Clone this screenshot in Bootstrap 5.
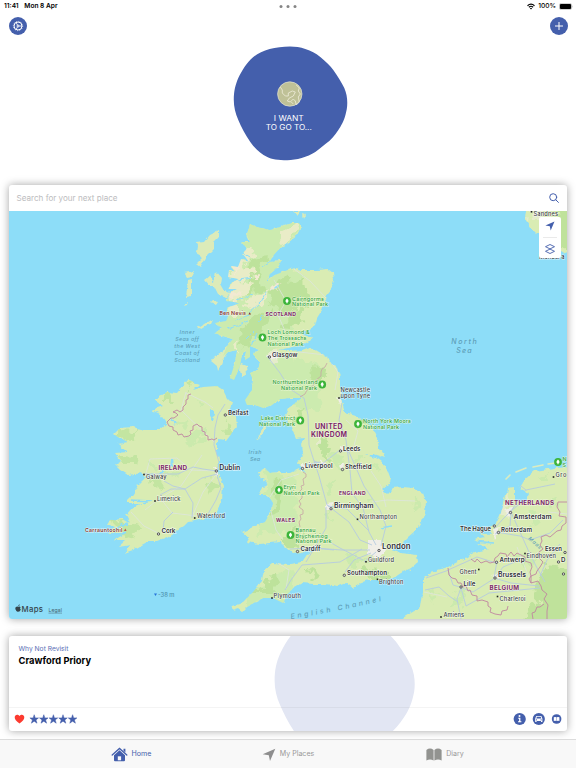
<!DOCTYPE html>
<html lang="en">
<head>
<meta charset="utf-8">
<meta name="viewport" content="width=device-width, initial-scale=1">
<title>Places</title>
<link href="https://cdn.jsdelivr.net/npm/bootstrap@5.3.0/dist/css/bootstrap.min.css" rel="stylesheet">
<style>
:root{--brand:#445fac}
body{font-family:Inter,"Liberation Sans",sans-serif;background:#fff;width:576px;height:768px;overflow:hidden;color:#000}
svg{display:block;flex:none}
.status{height:12px;padding:0 3px 0 4px;font-size:6.6px;font-weight:600;line-height:12px}
.battery-text{margin:0 3px;font-weight:500}
.dot3{width:3px;height:3px;border-radius:50%;background:#858585}
.topbar{height:28px;padding:0 8px 0 8.5px}
.round{width:18px;height:18px;background:var(--brand)}
.hero{height:145px;padding:6px 0 0 3px}
.hero-text{fill:#fff;font-size:7.3px;text-anchor:middle}
.panel{margin:0 9px;border-radius:3px;box-shadow:0 0 9px rgba(0,0,0,.36);background:#fff;overflow:hidden}
.search{height:26px;padding:0 8.5px 0 7.5px;font-size:8.100px;color:#bcbcbe}
.map-box{height:408px;background:#8dddf8}
.controls{right:6px;top:6px;width:22px;height:41px;border-radius:2px}
.controls hr{width:14px;color:#aaa}
.revisit{height:95px;margin-top:17px}
.revisit-blob{left:264.500px;top:-22px}
.revisit-top{height:71.5px;padding:9px 9.5px;border-bottom:1.5px solid rgba(0,0,0,.045)}
.kicker{font-size:6.7px;line-height:9px;color:#5a70b5}
.place{font-size:9.35px;line-height:13px;font-weight:700}
.revisit-foot{height:23.5px;padding:0 5px}
.tabs{height:29px;background:#f8f8f8;border-top:1px solid #dcdcdc;font-size:7.1px;color:#999}
.tab{width:157px;padding-top:1px}
.tab.on{color:var(--brand)}
.city{font-weight:600;fill:#2e3136;stroke:#fff;stroke-opacity:.8;stroke-width:1.2px;paint-order:stroke}
.town{font-weight:500;fill:#3c4146;stroke:#fff;stroke-opacity:.7;stroke-width:1px;paint-order:stroke}
.land-name{font-weight:700;fill:#7d2867;stroke:#fff;stroke-opacity:.6;stroke-width:1px;paint-order:stroke}
.park{font-size:5.45px;font-weight:500;fill:#2f9e3d;stroke:#f2fbe0;stroke-opacity:.8;stroke-width:1px;paint-order:stroke}
.peak{font-size:5.3px;font-weight:600;fill:#873930;stroke:#fff;stroke-opacity:.7;stroke-width:1px;paint-order:stroke}
.sea{font-style:italic;font-weight:500;fill:#5f9fb8}
</style>
<script src="https://cdn.jsdelivr.net/npm/bootstrap@5.3.0/dist/js/bootstrap.bundle.min.js"></script>
</head>
<body class="d-flex flex-column">

<div class="status d-flex align-items-center justify-content-between position-relative">
  <div class="d-flex"><span>11:41</span><span class="ms-1 text-nowrap">&nbsp;Mon 8 Apr</span></div>
  <div class="position-absolute start-50 translate-middle-x d-flex gap-1"><i class="dot3"></i><i class="dot3"></i><i class="dot3"></i></div>
  <div class="d-flex align-items-center">
    <svg width="8" height="7" viewBox="0 0 16 13" fill="none" stroke="#000" stroke-width="2.2"><path d="M1 5Q8-1.5 15 5M3.7 8Q8 4 12.3 8"/><path d="M8 12.5 5.7 10Q8 8.2 10.3 10Z" fill="#000" stroke="none"/></svg>
    <span class="battery-text">100%</span>
    <svg width="14" height="7" viewBox="0 0 14 7"><rect x=".4" y=".4" width="12.2" height="6.200" rx="1.7" fill="none" stroke="#aaa" stroke-width=".6"/><rect x=".9" y=".9" width="11.200" height="5.200" rx="1.1"/><path d="M13.200 2.5v2q.8-1 0-2" fill="#999"/></svg>
  </div>
</div>

<div class="topbar d-flex justify-content-between align-items-center">
  <span class="round rounded-circle d-flex align-items-center justify-content-center">
    <svg width="12" height="12" viewBox="0 0 24 24" fill="none" stroke="#fff" stroke-width="2"><circle cx="12" cy="12" r="8"/><circle cx="12" cy="12" r="9.3" stroke-width="1.600" stroke-dasharray="1.800 3.070"/><circle cx="12" cy="12" r="2"/><path d="M14 12h6M11 10 8 5M11 14 8 19" stroke-width="1.600"/></svg>
  </span>
  <span class="round rounded-circle d-flex align-items-center justify-content-center">
    <svg width="10" height="10" viewBox="0 0 10 10" stroke="#fff" stroke-width="1" stroke-linecap="round"><path d="M5 1.4v7.2M1.4 5h7.2"/></svg>
  </span>
</div>

<div class="hero">
  <svg class="mx-auto" width="116" height="116" viewBox="-.3 0 116 116">
    <defs><path id="blob" d="M56.7.4C62 .4 67 1 72 3 78 5 82 7 87 11 92 15 97 20 100 24 105 31 108 36 111 42 114 49 114.500 56 113.500 63 112 71 110 76 107 81 104 86 101 90 96 95 91 99 87 102 82 106 74 111 63 114.200 54 114.200 45 114.200 38 113.500 34 111 27 107.500 22 103 17 96 12 89 8 81 5 74 2 67 .5 61 .5 54 .5 45 2 39 5 32 9 24 13 17 20 11 28 4 42 .4 56.700.4Z"/></defs>
    <use href="#blob" x="1" fill="#445fac"/>
    <circle cx="57.500" cy="48" r="12.2" fill="#bfc197" stroke="#e4e4d4" stroke-width=".7"/>
    <path d="M48 41 50 44 50 47 53 50 56 50 56 47 60 45 63 46 61 50 57 52 55 55 58 56 61 53 63 55 64 59 67 56 66 51 68 48 66 45 67 42 64 39M59 56 61 58" fill="none" stroke="#f0eedb" stroke-width=".8" stroke-linejoin="round"/>
    <text class="hero-text" x="56.500" y="75.200" textLength="30" lengthAdjust="spacingAndGlyphs">I WANT</text>
    <text class="hero-text" x="56.500" y="83.600" textLength="46" lengthAdjust="spacingAndGlyphs">TO GO TO...</text>
  </svg>
</div>

<main class="panel">
  <div class="search d-flex align-items-center justify-content-between"><span>Search for your next place</span>
    <svg width="10" height="10" viewBox="0 0 10 10" fill="none" stroke="#445fac" stroke-width="1" stroke-linecap="round"><circle cx="4.200" cy="4.200" r="3.500"/><path d="m6.800 6.800 2.600 2.600"/></svg>
  </div>
  <div class="map-box position-relative">
    <svg width="558" height="408" viewBox="9 211 558 408">
      <defs>
        <filter id="rough" x="-2%" y="-2%" width="104%" height="104%"><feTurbulence type="fractalNoise" baseFrequency=".16" numOctaves="3" seed="4"/><feDisplacementMap in="SourceGraphic" scale="5" xChannelSelector="R" yChannelSelector="G"/></filter>
        <filter id="patchy" x="-5%" y="-5%" width="110%" height="110%"><feTurbulence type="fractalNoise" baseFrequency=".1" numOctaves="3" seed="9"/><feDisplacementMap in="SourceGraphic" scale="17" xChannelSelector="R" yChannelSelector="G"/></filter>
        <path id="gb" d="M250 224 257 227 270 230 280 227 292 223 299 223 301 227 297 235 288 242 280 248 272 257 270 262 281 261 277 268 270 274 267 281 275 275 285 271 295 268 303 270 317 270 328 269 333 273 334 280 332 287 327 293 326 300 322 310 317 318 315 325 307 330 298 335 303 335 312 337 309 341 303 345 292 347 279 350 290 351 302 350 310 347 318 352 327 357 329 361 337 368 340 377 340 390 342 402 345 412 355 415 363 420 372 427 377 437 379 448 385 458 373 454 366 454 375 457 382 462 387 470 390 478 388 485 382 490 387 494 393 488 403 487 413 488 423 493 426 502 425 513 422 521 415 532 408 538 401 545 391 550 401 553 417 555 418 562 411 568 401 573 395 577 388 580 378 580 368 580 360 583 353 588 346 583 338 586 325 584 313 584 302 583 293 588 287 595 283 603 273 598 263 598 255 602 247 607 242 612 238 609 232 611 233 606 242 603 253 592 262 581 264 570 273 563 290 564 302 562 308 553 319 547 310 547 302 552 292 553 285 547 280 542 270 543 260 544 246 542 249 537 242 532 253 527 265 522 272 510 273 503 268 495 258 495 263 487 269 483 261 479 258 472 265 468 270 473 280 472 290 472 298 468 307 473 298 462 303 453 302 443 305 437 296 438 290 424 285 417 290 407 302 398 290 398 280 399 272 405 263 408 255 405 247 405 245 400 252 390 253 380 250 373 258 370 260 362 253 354 260 350 250 346 250 357 245 360 246 350 242 354 240 366 234 380 230 378 235 363 237 350 228 352 223 356 227 346 233 339 223 336 215 333 222 328 215 323 226 321 229 316 227 308 240 303 227 301 231 292 237 289 228 289 233 282 239 279 228 277 229 270 236 272 231 266 238 267 241 259 249 262 243 254 247 248 241 242 250 242 247 235Z"/>
        <path id="ie" d="M182 387 188 380 199 384 193 390 203 387 217 386 223 390 227 398 232 403 229 412 236 417 237 427 232 433 226 441 217 440 217 450 219 460 218 473 223 485 222 500 217 512 208 517 197 521 188 522 183 527 175 532 167 538 157 542 147 542 133 550 124 553 131 545 118 547 126 540 115 540 122 533 108 533 115 528 107 525 110 520 123 519 130 523 126 515 133 507 142 503 125 503 133 495 138 485 145 478 142 473 128 475 120 470 115 465 122 461 115 453 127 452 118 444 128 442 118 437 114 434 120 428 133 427 145 430 160 430 167 424 160 414 152 410 163 406 154 400 167 392 177 393Z"/>
        <path id="eu" d="M401 619 411 613 421 607 423 593 423 578 431 572 448 567 465 558 475 552 489 549 477 543 487 544 474 539 485 537 479 532 493 533 488 528 497 523 501 513 505 500 508 488 514 487 514 500 524 503 529 493 519 488 524 480 535 471 555 468 572 467 572 624H401Z"/>
        <path id="no" d="M527 206 525 218 531 228 538 235 555 246 572 257V206Z"/>
        <clipPath id="landclip"><use href="#gb"/><use href="#ie"/><use href="#eu"/><use href="#no"/></clipPath>
        <g id="tree"><circle r="3.900" fill="#3cb43a"/><path d="M0-2.500C1.800-.8 2 .8.600 1.200V2.300H-.6V1.200C-2 .8-1.800-.8 0-2.500Z" fill="#fff"/></g>
        <circle id="pt" r="1.200" fill="#ddd" stroke="#3b3b40" stroke-width=".8"/>
        <rect id="sq" x="-.8" y="-.8" width="1.600" height="1.600" fill="#222"/>
      </defs>
      <g filter="url(#rough)">
        <g fill="#d9ecb3"><use href="#gb"/><use href="#ie"/><use href="#eu"/><use href="#no"/></g>
        <g fill="#dcebb9">
          <path d="M219 230 219 237 214 242 214 249 207 256 200 267 196 264 203 257 196 253 197 246 196 242 204 241 209 235ZM184 273 195 271 192 277 187 278ZM188 281 192 280 192 296 186 297ZM186 303 188 301 187 305 184 306ZM216 271 221 277 220 284 224 291 231 293 227 297 218 294 214 286 209 286 204 280 210 275 214 283ZM213 301 218 302 216 305 211 303ZM198 328 212 319 210 323 199 330ZM228 344 230 348 225 356 222 364 218 371 217 366 211 361 215 356 223 352ZM241 363 246 365 247 375 242 377 240 371ZM260 437 267 429 266 425 260 432 256 440ZM293 211 300 211 297 216ZM303 214 306 215 304 219Z"/>
        </g>
      </g>
      <g clip-path="url(#landclip)">
        <g filter="url(#patchy)">
          <path fill="#ccebaf" d="M244 216 308 217 283 260 305 278 290 305 295 338 275 348 260 420 200 370 205 300 228 252Z"/>
          <path fill="#ccebaf" d="M255 360 290 355 322 367 320 410 294 407 250 411ZM268 468 295 475 299 530 258 535ZM241 596 290 570 299 590 250 620Z"/>
          <path fill="#bde29b" d="M276 278 305 282 308 305 290 315 277 310 268 295ZM240 328 255 316 273 310 258 340 238 348ZM250 259 269 257 259 272 264 293 248 292ZM290 329 300 323 308 309 300 305 280 328ZM311 367 324 368 322 383 313 386ZM293 416 304 405 303 424 293 427ZM355 419 371 425 355 428ZM323 437 331 447 329 465 319 445ZM275 477 283 480 280 510 271 513ZM283 537 304 528 296 548 283 545ZM252 595 276 575 278 595ZM307 568 320 574 312 582ZM365 569 390 572 390 580 355 576Z"/>
          <path fill="#e9ecc7" d="M237 250 251 246 255 255 244 264 255 270 240 282 254 285 243 298 229 301 226 269ZM285 229 300 222 293 238 279 246ZM246 300 268 290 263 300 248 309ZM230 303 237 300 237 315 226 315ZM230 345 237 341 234 354Z"/>
          <path fill="#f2e9d2" d="M230 261 240 265 232 279ZM227 290 239 291 234 301ZM248 276 259 275 254 281ZM270 283 280 286 273 293Z"/>
          <path fill="#c3e5a1" d="M118 429 137 430 132 442 119 440ZM115 454 136 456 134 466 123 466ZM186 381 195 380 188 391ZM150 481 160 478 163 488 152 490ZM205 483 218 480 218 492 210 494ZM115 520 143 524 135 540 118 536ZM160 401 170 392 175 401ZM225 422 234 429 224 436ZM109 519 120 518 117 525Z"/>
          <path fill="#cbeaad" d="M150 463 158 463 155 470ZM185 439 204 428 207 436 190 446ZM199 401 205 403 197 409ZM174 424 187 421 185 430ZM172 469 180 477 167 475ZM325 485 335 480 334 499ZM322 515 330 508 331 523ZM375 463 382 470 374 471ZM365 497 374 499 366 506ZM353 456 365 456 357 462ZM344 555 373 560 347 567ZM415 495 421 507 414 510ZM330 456 342 454 340 471ZM535 476 547 472 545 482ZM527 510 541 514 534 527ZM547 502 559 500 556 510ZM459 590 466 600 453 609ZM427 590 437 587 432 601ZM509 553 534 557 526 570Z"/>
          <path fill="#bfe29b" d="M545 566 580 570 580 630 516 630 528 606 542 608 534 592ZM555 200 580 200 580 265 558 244Z"/>
          <path fill="#e5eccb" d="M529 211 548 214 545 222 530 222ZM501 515 504 501 509 492 507 519ZM343 390 344 404 340 404ZM318 434 323 440 318 448ZM266 352 280 352 276 359 266 357Z"/>
        </g>
        <g fill="#f0eee8" filter="url(#rough)"><path d="M368 541 381 541 386 549 379 558 368 555ZM266 355 274 353 280 356 270 359ZM326 504 332 503 333 511 326 511ZM302 463 307 465 302 472ZM340 445 345 446 341 452ZM336 397 342 398 341 404ZM213 467 218 467 218 477ZM319 459 326 463 321 465ZM340 464 344 464 342 472ZM491 575 499 574 498 580ZM504 510 513 507 511 517ZM493 529 500 527 495 540Z"/></g>
      </g>
      <g fill="#8dddf8" filter="url(#rough)"><path d="M209 409 214 410 216 416 212 420 209 415ZM171 419 177 421 174 425ZM171 459 173 459 174 467 170 467ZM159 474 163 469 163 473Z"/></g>
      <g fill="none" stroke="#8dddf8" stroke-width="1" filter="url(#rough)"><path d="M236 320 246 316 261 302 267 291M228 329 247 322M267 281 282 262M271 290 278 286M236 300 252 295M263 266 272 260M245 340 254 331M252 345 257 334M239 280 252 278M242 252 250 257M263 315 258 322"/><path d="M145 477 152 475M131 500 151 501M142 503 152 501M115 529 128 523M111 541 126 532M469 533 492 533M472 541 494 543M380 528 392 526" stroke-width="1.600"/></g>
      <g fill="none" stroke="#dcecc0" stroke-width="1.600" stroke-linecap="round"><path d="M506 479 510 475M516 472 526 468M533 467 543 465M548 464 556 463"/></g>
      <g fill="none" stroke="#dde4e1" stroke-width=".75" stroke-linejoin="round" clip-path="url(#landclip)">
        <path d="M303 346 285 331 278 315 286 301 274 280M294 269 310 281 326 298M335 390 338 372 326 355 299 352M186 393 205 402 213 408M186 392 181 410 214 442M145 477 150 459 177 458 191 470 216 471M145 510 160 498 181 486 202 455M160 498 172 513 205 517M131 512 144 526 158 533M218 472 203 492 192 517M283 540 276 530 268 500 281 480 299 474M273 560 289 570 286 589M415 501 387 500 372 502M346 420 358 431 353 449M371 471 381 486 386 507M548 512 567 514M517 547 530 580M424 592 447 597"/>
      </g>
      <g fill="none" stroke="#b5cbe0" stroke-width=".9" stroke-linejoin="round" clip-path="url(#landclip)">
        <path d="M267 356 280 373 290 389 304 398 308 415 309 445 314 461 319 476 327 505 349 522 360 540 372 545M314 461 322 464 340 450 349 452M342 403 339 420 346 440 350 470 352 493 363 508 369 532 376 545M349 452 364 486 380 510 386 526 381 546M328 506 347 509 369 531M304 465 320 462M290 549 314 548 342 550 370 550M306 562 315 547 326 528 326 507M345 572 354 560 371 553M364 562 376 552M328 541 340 548 363 560M285 590 291 580 302 565 340 562 362 549M225 404 218 415 215 428 214 445 219 462 217 472M217 471 203 469 193 467 178 474 144 474M217 474 202 478 185 489 171 489 160 495M185 489 173 486 164 481M217 475 221 488 216 500 208 514M185 489 193 503 192 518M163 532 164 521 173 512M313 548 334 550M494 529 503 519 511 511 523 501M496 532 520 536 530 540 550 533 563 520M511 512 510 526 495 534M511 512 520 532 529 552 536 566 545 582M497 561 494 578 511 583 539 586M496 563 477 557 448 570 453 585 460 587M462 588 473 592 495 578 503 567 515 562M461 588 457 599 461 619M461 588 466 606 489 593 540 588M426 578 449 570M425 590 439 587 449 596 458 602M511 511 526 490 517 483M526 490 555 484M560 544 547 560 540 576"/>
      </g>
      <g fill="none" stroke="#bf87a0" stroke-width=".9" stroke-linejoin="round">
        <path d="M191 394 188 395 188 399 186 400 186 404 183 407 183 410 180 412 177 410 173 412 176 413 178 415 174 418 171 418 167 422 169 426 173 427 173 430 177 432 178 435 182 434 184 437 189 436 191 434 190 431 193 430 193 426 197 424 199 426 202 427 202 431 205 432 205 435 208 436 208 440 212 439 214 440 217 438"/>
        <path d="M327 363 325 367 322 369 321 372 321 376 315 381 313 386 307 390 305 394 300 397M303 472 306 474 306 477 303 479 304 485 301 486 302 489 299 492 302 495 302 498 299 501 301 504 299 507 303 510 303 514 300 515 301 519 299 522 300 527" stroke="#c7a4a5" stroke-width=".8"/>
        <path d="M448 568 449 575 452 578 456 579 458 583 461 583 463 587 466 586 468 591 470 590 472 595 477 596 477 601 482 600 488 602 488 606 491 608 490 612 495 614 501 615 502 611 507 610 508 606M471 559 475 562 477 559 481 563 486 561 490 563 494 562 495 558 498 556 500 553 506 554 507 557 511 552 514 556 517 553 525 557 525 561 531 563 532 567 530 572 531 576 529 579 531 583 538 581 541 586 542 590 547 594 544 599 548 605 547 611 547 619M567 502 558 502 557 507 560 512 559 516 566 517 566 523 562 526 561 530 557 531 550 537 546 535 541 537 542 541 540 545 543 549 539 552 538 557 543 562 540 567 537 571 536 574 531 576 531 583M544 604 540 607 537 607 535 612 532 613 533 619"/>
      </g>
      <g>
        <use href="#tree" x="287" y="301"/><use href="#tree" x="262.500" y="337.500"/><use href="#tree" x="322.200" y="384.500"/><use href="#tree" x="300.300" y="420.500"/><use href="#tree" x="358" y="424"/><use href="#tree" x="279" y="490"/><use href="#tree" x="290.500" y="535"/><use href="#tree" x="558" y="462"/>
      </g>
      <g class="park">
        <text x="292" y="300.500" textLength="32">Cairngorms</text><text x="292" y="306.300" textLength="36">National Park</text>
        <text x="267.500" y="334" textLength="42">Loch Lomond &amp;</text><text x="267.500" y="339.800" textLength="39">The Trossachs</text><text x="267.500" y="345.500" textLength="36">National Park</text>
        <text x="272.500" y="384" textLength="45">Northumberland</text><text x="281" y="389.700" textLength="36">National Park</text>
        <text x="261" y="420" textLength="34">Lake District</text><text x="259" y="425.700" textLength="36">National Park</text>
        <text x="363" y="423.300" textLength="48">North York Moors</text><text x="363" y="429.200" textLength="36">National Park</text>
        <text x="283.500" y="489.300">Eryri</text><text x="283.500" y="495.200" textLength="36">National Park</text>
        <text x="295.500" y="531.500" textLength="20">Bannau</text><text x="295.500" y="537.500" textLength="32">Brycheiniog</text><text x="295.500" y="543.300" textLength="36">National Park</text>
        <text x="562.500" y="461">N</text><text x="562.500" y="467">S</text>
      </g>
      <g class="land-name">
        <text x="265.500" y="315.800" font-size="5.200" textLength="30.500">SCOTLAND</text>
        <text x="158.500" y="470.100" font-size="6.300" textLength="28.500">IRELAND</text>
        <text x="315" y="428.600" font-size="6.900" textLength="27.500">UNITED</text><text x="311" y="437.400" font-size="6.900" textLength="36">KINGDOM</text>
        <text x="339" y="494.900" font-size="5" textLength="26.500">ENGLAND</text>
        <text x="276" y="521.600" font-size="5" textLength="19">WALES</text>
        <text x="505" y="504.500" font-size="6.200" textLength="49">NETHERLANDS</text>
        <text x="489.500" y="589.800" font-size="6.200" textLength="29.500">BELGIUM</text>
      </g>
      <g class="peak"><text x="219.500" y="315.300" textLength="26.500">Ben Nevis</text><path d="M248.400 314.500 249.700 312.200 251 314.500Z" stroke="none"/><text x="85" y="531.800" textLength="37.500">Carrauntoohil</text><path d="M124 531 125.300 528.500 126.600 531Z" stroke="none" fill="#bd5547"/></g>
      <g>
        <use href="#pt" x="269.500" y="357"/><use href="#pt" x="225.300" y="415"/><use href="#pt" x="216.300" y="471"/><use href="#pt" x="158.500" y="534"/><use href="#pt" x="340.500" y="451"/><use href="#pt" x="302.500" y="468.500"/><use href="#pt" x="342.500" y="469.500"/><use href="#pt" x="331" y="508.800"/><use href="#pt" x="297.500" y="551.500"/><use href="#pt" x="379" y="550.500"/><use href="#pt" x="344.300" y="575.300"/><use href="#pt" x="510.500" y="512.500"/><use href="#pt" x="494.300" y="526"/><use href="#pt" x="498.500" y="532.500"/><use href="#pt" x="496.500" y="562.300"/><use href="#pt" x="495" y="578"/><use href="#pt" x="461" y="587"/><use href="#pt" x="565" y="552.500"/><use href="#pt" x="558.500" y="562"/><use href="#pt" x="563.500" y="574"/>
        <use href="#sq" x="144" y="474.500"/><use href="#sq" x="155" y="501"/><use href="#sq" x="194.700" y="518"/><use href="#sq" x="339" y="398"/><use href="#sq" x="357.500" y="519.300"/><use href="#sq" x="366" y="561.800"/><use href="#sq" x="377.500" y="579.300"/><use href="#sq" x="272" y="598"/><use href="#sq" x="531.500" y="211.800"/><use href="#sq" x="553.500" y="477"/><use href="#sq" x="525" y="553.500"/><use href="#sq" x="478.800" y="569.500"/><use href="#sq" x="497.500" y="596.500"/><use href="#sq" x="441" y="617"/>
      </g>
      <g class="city" font-size="6.200">
        <text x="272" y="356.800" textLength="25.500">Glasgow</text><text x="228" y="414.500" textLength="20.500">Belfast</text><text x="219.300" y="470.200" font-size="7" textLength="21">Dublin</text><text x="161.500" y="533.200" font-size="6.400" textLength="14">Cork</text>
        <text x="343" y="450.500" textLength="17.500">Leeds</text><text x="305" y="468" textLength="27.500">Liverpool</text><text x="345" y="469" textLength="26.500">Sheffield</text><text x="334" y="508.200" font-size="7" textLength="39.500">Birmingham</text><text x="300.500" y="550.700" textLength="20">Cardiff</text><text x="382" y="549.300" font-size="7.900" textLength="28.500">London</text><text x="347" y="574.800" textLength="40">Southampton</text>
        <text x="513.500" y="518.500" font-size="6.800" textLength="38">Amsterdam</text><text x="460" y="530.500" textLength="31">The Hague</text><text x="501" y="532" textLength="31">Rotterdam</text><text x="499.500" y="561.600" textLength="25">Antwerp</text><text x="498" y="577" font-size="6.900" textLength="28">Brussels</text><text x="463.500" y="586.300" textLength="12">Lille</text><text x="545" y="551.300" font-size="6" textLength="17">Essen</text><text x="561" y="561.500">D</text>
      </g>
      <g class="town" font-size="5.700">
        <text x="146" y="479" textLength="20.500">Galway</text><text x="157" y="500.500" textLength="23.500">Limerick</text><text x="197" y="518.200" textLength="28">Waterford</text><text x="340.500" y="391.800" textLength="29.500">Newcastle</text><text x="340.500" y="398" textLength="29.500">upon Tyne</text><text x="359.500" y="519.300" textLength="37.500">Northampton</text><text x="368" y="561.800" textLength="26">Guildford</text><text x="379" y="583.600" textLength="24.500">Brighton</text><text x="273.500" y="598" textLength="27.500">Plymouth</text>
        <text x="533.500" y="216.300" textLength="24.500">Sandnes</text><text x="539" y="258.500" textLength="25.500">Mandal a</text><text x="555.500" y="476.500" textLength="11">Gro</text><text x="526.500" y="558" textLength="29.500">Eindhoven</text><text x="459.500" y="573.500" textLength="17">Ghent</text><text x="499.500" y="600.700" textLength="26">Charleroi</text><text x="443.500" y="617.300" textLength="20.500">Amiens</text>
      </g>
      <g class="sea" font-size="5.400" text-anchor="middle">
        <text x="187" y="334.300" textLength="15">Inner</text><text x="187" y="341" textLength="23.500">Seas off</text><text x="187" y="347.900" textLength="25.500">the West</text><text x="187" y="354.800" textLength="24.500">Coast of</text><text x="187" y="361.600" textLength="25.500">Scotland</text>
        <text x="464" y="343.800" font-size="7.100" textLength="25.500">North</text><text x="464" y="352.900" font-size="7.100" textLength="15.500">Sea</text>
        <text x="255" y="454.300" textLength="13">Irish</text><text x="255" y="461.200" textLength="10">Sea</text>
      </g>
      <path id="channel" d="M291 619Q340 611 390 599" fill="none"/><text class="sea" font-size="7" letter-spacing="2.700"><textPath href="#channel">English Channel</textPath></text>
      <text class="sea" font-size="5" transform="translate(528 539) rotate(42)" letter-spacing=".7">Maas</text>
      <path d="M154 593.500h3l-1.500 2.600Z" fill="#2572da"/><text x="158" y="597.300" font-size="5.800" font-weight="500" fill="#4d92ae" textLength="16.500">-38 m</text>
      <g fill="#35444b"><path d="M18.300 606.700q1.500-.7 2.300.5-1.300 1.200.2 2.300-1 2.700-2.400 2-1 .6-2-.5-1.900-2.400-.5-3.900 1-.9 2.400-.4ZM18.200 606.300q0-1.600 1.600-2 .1 1.600-1.600 2Z"/><text x="21.500" y="612" font-size="7.800" font-weight="500" textLength="21.500">Maps</text><text x="48.500" y="611.800" font-size="5.200" text-decoration="underline" fill="#45626e" textLength="13.500">Legal</text></g>
    </svg>
    <div class="controls position-absolute bg-white d-flex flex-column align-items-center justify-content-between py-1">
      <svg width="10" height="10" viewBox="0 0 10 10" fill="#445fac"><path d="M9.500.5 5.700 9.500 4.800 5.200.4 4.400Z"/></svg>
      <hr class="m-0">
      <svg width="10" height="10" viewBox="0 0 10 10" fill="none" stroke="#445fac" stroke-width=".9" stroke-linejoin="round"><path d="M5 .5 9.500 2.700 5 4.900.5 2.700ZM5 5.100 9.500 7.300 5 9.500.5 7.300Z"/></svg>
    </div>
  </div>
</main>

<section class="panel revisit position-relative">
  <svg class="revisit-blob position-absolute" width="142" height="142" viewBox="0 0 115 115"><use href="#blob" fill="#e2e6f3"/></svg>
  <div class="revisit-top position-relative"><div class="kicker">Why Not Revisit</div><div class="place">Crawford Priory</div></div>
  <div class="revisit-foot position-relative d-flex align-items-center justify-content-between">
    <div class="d-flex align-items-center">
      <svg width="11" height="10" viewBox="0 0 11 10"><path d="M5.500 9.600C2 7 .7 5.300.7 3.300.7.500 4-.2 5.500 2 7-.2 10.300.5 10.300 3.300 10.300 5.300 9 7 5.500 9.600Z" fill="#fc3b30"/></svg>
      <svg class="ms-1" width="49" height="10" viewBox="-.5 0 49 10" fill="#445fac" stroke="#445fac" stroke-width=".5" stroke-linejoin="round"><defs><path id="star" d="M4.700.7 5.800 3.900H9L6.500 5.900 7.500 9.200 4.700 7.200 1.900 9.200 2.900 5.900.4 3.900H3.600Z"/></defs><use href="#star"/><use href="#star" x="9.600"/><use href="#star" x="19.200"/><use href="#star" x="28.800"/><use href="#star" x="38.400"/></svg>
    </div>
    <svg width="50" height="14" viewBox="0 0 50 14"><g fill="#445fac"><circle cx="7.700" cy="7" r="6.100"/><circle cx="26.800" cy="7" r="6.100"/><circle cx="44.600" cy="7" r="4.800"/></g><g fill="#fff"><circle cx="7.500" cy="4" r="1"/><path d="M6.200 5.700H8.400V9.200H9.400V10.200H6V9.200H7.100V6.700H6.200ZM23.200 6.700 24.100 4.300Q24.300 3.900 24.800 3.900H28.800Q29.300 3.900 29.500 4.300L30.400 6.700V10H29V9H24.600V10H23.200ZM41.800 5.300Q43.300 4.600 44.400 5.300V9Q43 8.400 41.800 9ZM44.800 5.300Q46 4.600 47.400 5.300V9Q46 8.400 44.800 9Z"/></g><g fill="#445fac"><path d="M24.300 6.400 24.900 4.700H28.700L29.300 6.400Z"/><circle cx="24.500" cy="7.800" r=".6"/><circle cx="29.100" cy="7.800" r=".6"/></g></svg>
  </div>
</section>

<nav class="tabs d-flex mt-auto justify-content-center">
  <div class="tab on d-flex align-items-center justify-content-center"><svg class="me-1" width="17" height="15" viewBox="0 0 17 15"><path d="M1.200 8 8.500 1.400 15.800 8" fill="none" stroke="#445fac" stroke-width="1.300" stroke-linecap="round"/><path d="M12.500 1.800h1.900v3.700l-1.900-1.800ZM8.500 3.300 14 8.300V13.200Q14 14.200 13 14.200H4Q3 14.200 3 13.200V8.300Z" fill="#445fac"/><path d="M6.800 9.300h3.300v4h-3.300Z" fill="#f8f8f8"/></svg><span>Home</span></div>
  <div class="tab d-flex align-items-center justify-content-center"><svg class="me-1" width="14" height="14" viewBox="0 0 14 14" fill="#8e8e8e"><path d="M13.300.8 8 13 6.800 7.200.7 6.200Z"/></svg><span>My Places</span></div>
  <div class="tab d-flex align-items-center justify-content-center"><svg class="me-1" width="16" height="13" viewBox="0 0 16 13" fill="#929390"><path d="M.4 2Q4-.8 7.600 2V12.400Q4 10.400.4 12.400ZM8.400 2Q12-.8 15.600 2V12.400Q12 10.400 8.400 12.400Z"/></svg><span>Diary</span></div>
</nav>
</body>
</html>
